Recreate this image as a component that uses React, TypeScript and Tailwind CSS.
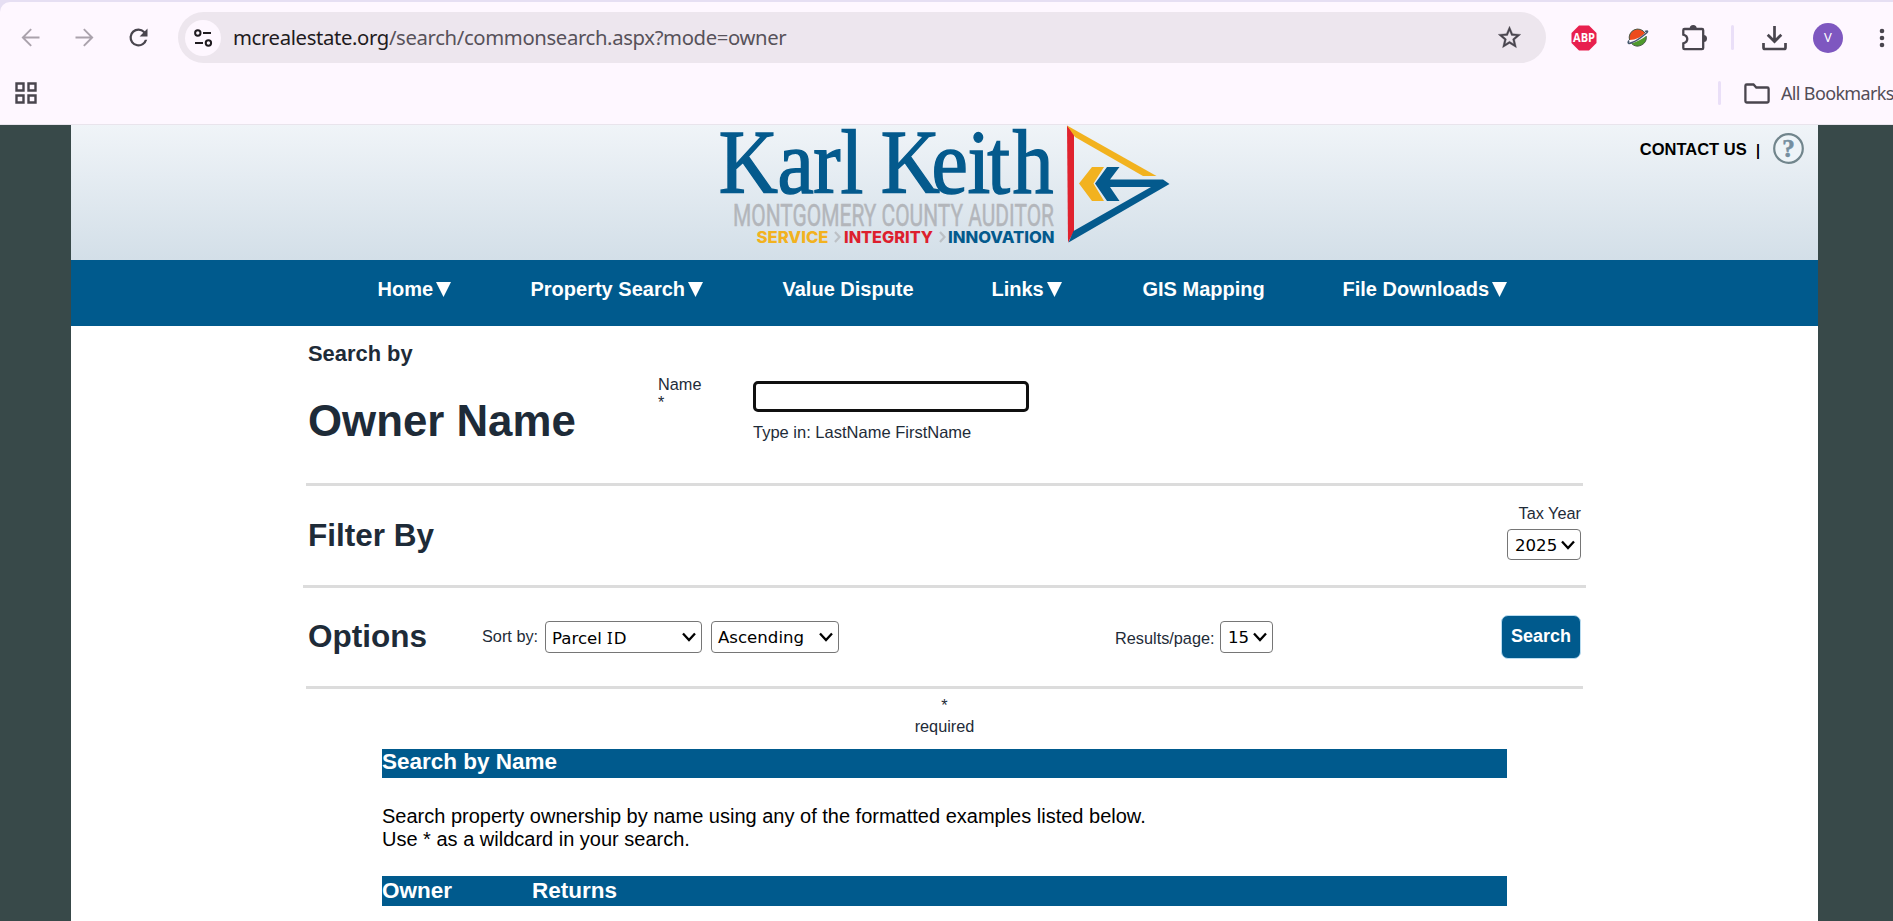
import React from "react";

function Chevron() {
  return (
    <svg width="14" height="10" viewBox="0 0 14 10" className="shrink-0" fill="none">
      <path d="M1 1.5 7 8 13 1.5" stroke="#000" strokeWidth="2.3" />
    </svg>
  );
}

function SelectBox({ className, children }: { className: string; children: React.ReactNode }) {
  return (
    <button
      type="button"
      className={
        "flex items-center justify-between rounded-[4px] border border-[#767676] bg-white pr-[5px] font-['DejaVu_Sans',sans-serif] text-[16.6px] leading-[28px] text-black " +
        className
      }
    >
      <span className="whitespace-nowrap pt-[2px]">{children}</span>
      <Chevron />
    </button>
  );
}

function BrowserBar() {
  return (
    <div className="h-[125px] shrink-0 bg-[#e6dff3] pt-[2px] font-['Noto_Sans',sans-serif]">
      <div className="h-[123px] rounded-tl-[10px] border-b border-[#e9e4ec] bg-[#fef7ff]">
        <div className="flex h-[71px] items-center">
          <svg width="27" height="27" viewBox="0 0 24 24" className="ml-[17px]" fill="#aaa2ac">
            <path d="M20 11.1H7.3l5.900-5.900L12 4l-8 8 8 8 1.200-1.200-5.900-5.900H20z" />
          </svg>
          <svg width="27" height="27" viewBox="0 0 24 24" className="ml-[27px]" fill="#aaa2ac">
            <path d="M4 11.1h12.700l-5.900-5.900L12 4l8 8-8 8-1.200-1.200 5.900-5.900H4z" />
          </svg>
          <svg width="27" height="27" viewBox="0 0 24 24" className="ml-[27px]" fill="#49454e">
            <path d="M17.65 6.35A7.96 7.96 0 0 0 12 4a8 8 0 1 0 7.73 10h-2.08A6 6 0 1 1 12 6c1.66 0 3.14.69 4.22 1.78L13 11h7V4z" />
          </svg>
          <div className="ml-[26px] flex h-[51px] w-[1368px] items-center rounded-full bg-[#ede6ee] pl-[7px]">
            <div className="flex h-[36px] w-[36px] items-center justify-center rounded-full bg-[#fef7ff]">
              <svg width="20" height="20" viewBox="0 0 20 20" fill="none" stroke="#1f1b20" strokeWidth="2">
                <circle cx="4.8" cy="5" r="2.7" />
                <path d="M10 5h8M2 15h8" />
                <circle cx="15.4" cy="15" r="2.7" />
              </svg>
            </div>
            <span className="ml-[12px] whitespace-nowrap pb-px text-[20.3px] leading-[30px] tracking-[-0.36px] text-[#57525a]">
              <span className="text-[#1f1b20]">mcrealestate.org</span>/search/commonsearch.aspx?mode=owner
            </span>
            <svg width="27" height="27" viewBox="0 0 24 24" className="ml-auto mr-[23px]" fill="#49454e">
              <path d="M22 9.24l-7.19-.62L12 2 9.19 8.63 2 9.24l5.46 4.73L5.82 21 12 17.27 18.18 21l-1.63-7.03zM12 15.4l-3.76 2.27 1-4.28-3.32-2.88 4.38-.38L12 6.1l1.71 4.04 4.38.38-3.32 2.88 1 4.28z" stroke="#49454e" strokeWidth="0.300" />
            </svg>
          </div>
          <svg width="26" height="26" viewBox="0 0 26 26" className="ml-[25px]">
            <path d="M8 .5h10L25.500 8v10L18 25.500H8L.5 18V8z" fill="#e8204e" />
            <text x="13" y="17.200" textAnchor="middle" textLength="22" lengthAdjust="spacingAndGlyphs" fontSize="12.500" fontWeight="700" fill="#fff" fontFamily="Open Sans, sans-serif">ABP</text>
          </svg>
          <svg width="22" height="20" viewBox="0 0 22 20" className="ml-[30px]">
            <path d="M2.500 12A8.600 8.600 0 0 1 18 5C14 9 9 12 2.500 12z" fill="#ee4b1c" />
            <path d="M19.200 8A8.700 8.700 0 0 1 4.500 15.500C10 14 15 11 19.200 8z" fill="#4f9a2c" />
            <path d="M2.500 12A8.600 8.600 0 0 1 18 5M19.200 8A8.700 8.700 0 0 1 4.500 15.500" fill="none" stroke="#475a48" strokeWidth="1" />
            <path d="M2 12.500c-2 3 0 3.500 3 2C10 13 16 8 19.500 5c2-2 1-2.500-1.500-1.500" fill="none" stroke="#45586d" strokeWidth="1.600" />
          </svg>
          <svg width="26" height="27" viewBox="0 0 26 27" className="ml-[32px]" fill="none">
            <path d="M3.500 5H21q1.200 0 1.200 1.200V24q0 1.200-1.200 1.200H3.500q-1.200 0-1.200-1.200v-4.600c5.300-1.600 5.300-7.200 0-8.800V6.200Q2.300 5 3.500 5z" stroke="#49454e" strokeWidth="2.300" />
            <path d="M8.700 4.500a3.500 3.500 0 0 1 7 0zM22.500 11a3.500 3.500 0 0 1 0 7z" fill="#49454e" />
          </svg>
          <div className="ml-[24px] h-[25px] w-[3px] rounded bg-[#eadff8]" />
          <svg width="25" height="26" viewBox="0 0 25 26" className="ml-[28px]" fill="none" stroke="#49454e" strokeWidth="2.700">
            <path d="M12.500 1v15M5.700 9.700l6.800 6.800 6.800-6.800M1.500 18v4.500q0 1.500 1.500 1.500h19q1.500 0 1.500-1.500V18" />
          </svg>
          <div className="ml-[26px] flex h-[30px] w-[30px] items-center justify-center rounded-full bg-[#7e57c0] text-[13px] text-white">V</div>
          <svg width="6" height="20" viewBox="0 0 6 20" className="ml-[36px]" fill="#49454e">
            <circle cx="3" cy="3" r="2.300" />
            <circle cx="3" cy="10" r="2.300" />
            <circle cx="3" cy="17" r="2.300" />
          </svg>
        </div>
        <div className="flex h-[40px] items-center">
          <svg width="22" height="22" viewBox="0 0 22 22" className="ml-[15px]" fill="none" stroke="#49454e" strokeWidth="2.400">
            <path d="M1.500 1.500h7v7h-7zM13.500 1.500h7v7h-7zM1.500 13.500h7v7h-7zM13.500 13.500h7v7h-7z" />
          </svg>
          <div className="ml-auto h-[24px] w-[3px] rounded bg-[#eadff8]" />
          <svg width="26" height="21" viewBox="0 0 26 21" className="ml-[23px]" fill="none" stroke="#49454e" strokeWidth="2.300">
            <path d="M2.700 1.500h6.800l2.800 3h11q1.300 0 1.300 1.300v12.400q0 1.300-1.300 1.300H2.700q-1.300 0-1.300-1.300V2.800q0-1.300 1.300-1.300z" />
          </svg>
          <span className="ml-[11px] w-[112px] whitespace-nowrap text-[18px] leading-[28px] tracking-[-0.65px] text-[#524d57]">All Bookmarks</span>
        </div>
      </div>
    </div>
  );
}

function Logo() {
  return (
    <svg width="460" height="120" viewBox="715 125 460 120" className="absolute left-[644px] top-0 overflow-visible">
      <text
        transform="scale(0.9 1)"
        x="798.500 864 903.500 934 958 978.500 1035 1075 1097 1125"
        y="193"
        fontSize="91"
        fill="#045a8d"
        stroke="#045a8d"
        strokeWidth="1.500"
        fontFamily="Liberation Serif, serif"
      >
        Karl Keith
      </text>
      <text x="733" y="226" fontSize="31.500" textLength="321" lengthAdjust="spacingAndGlyphs" fill="#b3b6bb" stroke="#b3b6bb" strokeWidth="0.500" fontFamily="Roboto, sans-serif">MONTGOMERY COUNTY AUDITOR</text>
      <g fontSize="15.800" fontWeight="800" fontFamily="Inter, sans-serif">
        <text x="756.500" y="242.500" textLength="72" lengthAdjust="spacingAndGlyphs" fill="#f2b21f">SERVICE</text>
        <text x="844" y="242.500" textLength="89" lengthAdjust="spacingAndGlyphs" fill="#dd1f2e">INTEGRITY</text>
        <text x="948" y="242.500" textLength="106.500" lengthAdjust="spacingAndGlyphs" fill="#045a8d">INNOVATION</text>
      </g>
      <path d="M835 232l4.500 5-4.500 5M940 232l4.500 5-4.500 5" fill="none" stroke="#bcc0c5" strokeWidth="2.200" />
      <path d="M1067 125.500l7 8v98l-6 11z" fill="#e0222e" />
      <path d="M1067 125.500l89.500 50.500H1143l-68-39z" fill="#f2b21f" />
      <path d="M1092 167h12l-10.500 16.500L1104 201h-12l-13-17.500z" fill="#f2b21f" />
      <path d="M1107 167h12.500l-9.500 12.500h53l6.500 4.500-101 58.500 5-11.500 77.500-44h-41l9.500 14h-12.500l-12-17.500z" fill="#045a8d" />
    </svg>
  );
}

function Header() {
  return (
    <header className="relative h-[135px] bg-linear-to-b from-[#f0f4f8] to-[#d3dfe8]">
      <Logo />
      <div className="flex items-start justify-end pr-[14px] pt-[8px] text-[16.5px] font-bold leading-[33px] text-black">
        <a>CONTACT US</a>
        <span className="ml-[9px] mt-px font-normal [text-shadow:0.4px_0_0_#000]">|</span>
        <svg width="31" height="31" viewBox="0 0 31 31" className="ml-[13px]">
          <circle cx="15.500" cy="15.500" r="14.300" fill="#eef4f8" stroke="#71858c" strokeWidth="2.200" />
          <text x="15.500" y="23.500" textAnchor="middle" fontSize="25" fontWeight="700" fill="#758fa0" stroke="#758fa0" strokeWidth="0.600" fontFamily="Liberation Serif, serif">?</text>
        </svg>
      </div>
    </header>
  );
}

function NavItem({ label, menu, className }: { label: string; menu?: boolean; className: string }) {
  return (
    <a className={"flex shrink-0 items-center whitespace-nowrap " + className}>
      {label}
      {menu && (
        <svg width="15" height="15" viewBox="0 0 15 15" className="ml-[3px]" fill="#fff">
          <path d="M0 0h15L7.500 15z" />
        </svg>
      )}
    </a>
  );
}

function Nav() {
  return (
    <nav className="flex h-[66px] bg-[#005a8d] pl-[306.500px] text-[20px] font-bold leading-[58px] text-white [&>a]:h-[58px]">
      <NavItem label="Home" menu className="w-[153px]" />
      <NavItem label="Property Search" menu className="w-[252px]" />
      <NavItem label="Value Dispute" className="w-[209px]" />
      <NavItem label="Links" menu className="w-[151px]" />
      <NavItem label="GIS Mapping" className="w-[200px]" />
      <NavItem label="File Downloads" menu className="w-[180px]" />
    </nav>
  );
}

function SearchForm() {
  return (
    <form className="pl-[232px] pr-[232px] text-[16.3px] text-[#1e2b38]">
      <section className="mx-[3px] flex h-[160px] border-b-[3px] border-[#dcdcdc] pl-[2px]">
        <div className="w-[350px] pt-[16px] font-bold">
          <h2 className="text-[21.9px] leading-[24px]">Search by</h2>
          <h1 className="mt-[29px] text-[43.8px] leading-[52px]">Owner Name</h1>
        </div>
        <div className="w-[95px] pt-[49px] leading-[18px]">
          <div>Name</div>
          <div>*</div>
        </div>
        <div className="pt-[55px]">
          <input className="block h-[31px] w-[276px] rounded-[5px] border-[3px] border-[#101010] bg-white" />
          <div className="mt-[10px] text-[16.5px] leading-[20px]">Type in: LastName FirstName</div>
        </div>
      </section>
      <section className="flex h-[102px] items-start justify-between border-b-[3px] border-[#dcdcdc] pl-[5px] pr-[5px]">
        <h2 className="mt-[31px] text-[31.5px] font-bold leading-[36px]">Filter By</h2>
        <div className="flex flex-col items-end pt-[17px] leading-[20px]">
          <label>Tax Year</label>
          <SelectBox className="mt-[6px] h-[31px] w-[74px] pl-[7px]">2025</SelectBox>
        </div>
      </section>
      <section className="mx-[3px] flex h-[101px] items-start border-b-[3px] border-[#dcdcdc] pl-[2px]">
        <h2 className="mt-[30px] w-[174px] text-[31.5px] font-bold leading-[36px]">Options</h2>
        <label className="mt-[32px] w-[63px] leading-[32px]">Sort by:</label>
        <SelectBox className="mt-[33px] h-[32px] w-[157px] pl-[6px]">
          Parcel <span className="font-['Noto_Sans',sans-serif] tracking-[1px]">I</span>D
        </SelectBox>
        <SelectBox className="ml-[9px] mt-[33px] h-[32px] w-[128px] pl-[6px]">Ascending</SelectBox>
        <label className="ml-[276px] mt-[34px] w-[105px] leading-[32px]">Results/page:</label>
        <SelectBox className="mt-[33px] h-[32px] w-[53px] pl-[7px]">15</SelectBox>
        <button type="button" className="ml-auto mr-[2px] mt-[27px] h-[44px] w-[80px] rounded-[7px] border border-[#b9dcf0] bg-[#005a8d] pb-[2px] text-[18px] font-bold text-white">
          Search
        </button>
      </section>
      <div className="pt-[6px] text-center leading-[20px]">
        <div>*</div>
        <div className="pt-px">required</div>
      </div>
    </form>
  );
}

function HelpText() {
  return (
    <section className="ml-[311px] mt-[13px] w-[1125px] text-black">
      <h3 className="h-[29px] bg-[#005a8d] text-[22.5px] font-bold leading-[26px] text-white">Search by Name</h3>
      <p className="mt-[27px] text-[20px] leading-[23px]">
        Search property ownership by name using any of the formatted examples listed below.
        <br />
        Use * as a wildcard in your search.
      </p>
      <div className="mt-[25px] flex h-[30px] bg-[#005a8d] text-[22.5px] font-bold leading-[29px] text-white">
        <span className="w-[150px]">Owner</span>
        <span>Returns</span>
      </div>
    </section>
  );
}

export default function App() {
  return (
    <div className="flex h-[921px] w-[1893px] flex-col overflow-hidden bg-[#384949] font-['Liberation_Sans',Arial,sans-serif]">
      <BrowserBar />
      <main className="ml-[71px] w-[1747px] flex-1 bg-white">
        <Header />
        <Nav />
        <SearchForm />
        <HelpText />
      </main>
    </div>
  );
}
